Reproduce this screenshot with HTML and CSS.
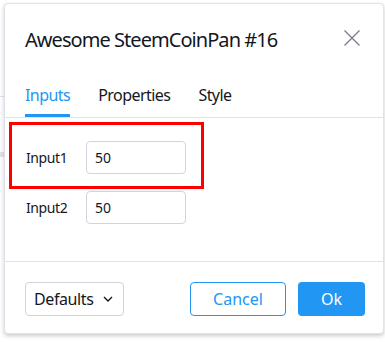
FILE: index.html
```html
<!DOCTYPE html>
<html>
<head>
<meta charset="utf-8">
<link rel="stylesheet" href="styles.css">
</head>
<body>
<div class="backdrop">
  <div class="bg-line bg-line-1"></div>
  <div class="bg-line bg-line-2"></div>
  <div class="dialog">
    <div class="header">
      <div class="title">Awesome SteemCoinPan #16</div>
      <svg class="close" width="18" height="18" viewBox="0 0 18 18">
        <path d="M1.5 1.5 L16.5 16.5 M16.5 1.5 L1.5 16.5" stroke="#787b86" stroke-width="1.3" fill="none"/>
      </svg>
    </div>
    <div class="tabs">
      <div class="tab active">Inputs</div>
      <div class="tab">Properties</div>
      <div class="tab">Style</div>
    </div>
    <div class="content">
      <div class="row">
        <div class="label">Input1</div>
        <div class="field">50</div>
      </div>
      <div class="row">
        <div class="label">Input2</div>
        <div class="field">50</div>
      </div>
      <div class="highlight"></div>
    </div>
    <div class="footer">
      <div class="select">Defaults
        <svg class="chev" width="12" height="8" viewBox="0 0 12 8"><path d="M2 2 L6 6 L10 2" stroke="#131722" stroke-width="1.4" fill="none"/></svg>
      </div>
      <div class="actions">
        <div class="btn btn-cancel">Cancel</div>
        <div class="btn btn-ok">Ok</div>
      </div>
    </div>
  </div>
</div>
</body>
</html>
```
FILE: styles.css
```css
html, body {
  margin: 0;
  padding: 0;
  background: #ffffff;
  font-family: "Noto Sans", "DejaVu Sans", sans-serif;
  color: #131722;
}
.backdrop {
  position: relative;
  width: 385px;
  height: 342px;
  overflow: hidden;
  padding: 3px 0 0 4px;
  box-sizing: border-box;
}
.bg-line {
  position: absolute;
  left: 0;
  width: 6px;
  background: #e0e3eb;
}
.bg-line-1 { top: 96px; height: 1px; }
.bg-line-2 { top: 152px; height: 5px; }
.dialog {
  position: relative;
  width: 380px;
  height: 331px;
  box-sizing: border-box;
  border: 1px solid #e0e3eb;
  border-radius: 4px;
  background: #fff;
  box-shadow: 0 2px 4px rgba(0,0,0,0.2);
  display: flex;
  flex-direction: column;
}
.header {
  height: 72px;
  display: flex;
  align-items: center;
  justify-content: space-between;
  padding: 0 22px 0 20px;
  flex-shrink: 0;
}
.title {
  font-size: 20px;
  line-height: 24px;
  letter-spacing: -0.95px;
}
.close { margin-top: -5px; }
.tabs {
  height: 41px;
  display: flex;
  gap: 28px;
  padding: 0 20px;
  border-bottom: 1px solid #e0e3eb;
  flex-shrink: 0;
}
.tab {
  font-size: 16px;
  line-height: 38px;
  letter-spacing: -0.55px;
  border-bottom: 3px solid transparent;
}
.tab.active {
  color: #2196f3;
  border-bottom-color: #2196f3;
}
.content {
  position: relative;
  flex: 1;
  padding: 23px 20px 0 21px;
  display: flex;
  flex-direction: column;
  gap: 17px;
}
.row {
  display: flex;
  align-items: center;
  height: 33px;
}
.label {
  width: 60px;
  font-size: 14px;
  letter-spacing: -0.4px;
}
.field {
  width: 100px;
  height: 33px;
  box-sizing: border-box;
  border: 1px solid #d1d4dc;
  border-radius: 4px;
  font-size: 14px;
  line-height: 31px;
  padding-left: 8px;
}
.highlight {
  position: absolute;
  left: 4px;
  top: 4px;
  width: 195px;
  height: 67px;
  box-sizing: border-box;
  border: 3px solid #ff0000;
}
.footer {
  height: 72px;
  border-top: 1px solid #e0e3eb;
  display: flex;
  align-items: flex-start;
  justify-content: space-between;
  padding: 20px 18px 0 20px;
  box-sizing: border-box;
  flex-shrink: 0;
}
.select {
  width: 99px;
  height: 34px;
  box-sizing: border-box;
  border: 1px solid #d1d4dc;
  border-radius: 4px;
  font-size: 16px;
  letter-spacing: -0.4px;
  display: flex;
  align-items: center;
  justify-content: space-between;
  padding: 0 9px 0 8px;
}
.actions {
  display: flex;
  gap: 12px;
}
.btn {
  height: 34px;
  box-sizing: border-box;
  border-radius: 4px;
  font-size: 16px;
  display: flex;
  align-items: center;
  justify-content: center;
}
.btn-cancel {
  width: 96px;
  border: 1px solid #2196f3;
  color: #2196f3;
}
.btn-ok {
  width: 67px;
  background: #2196f3;
  color: #fff;
}
```
